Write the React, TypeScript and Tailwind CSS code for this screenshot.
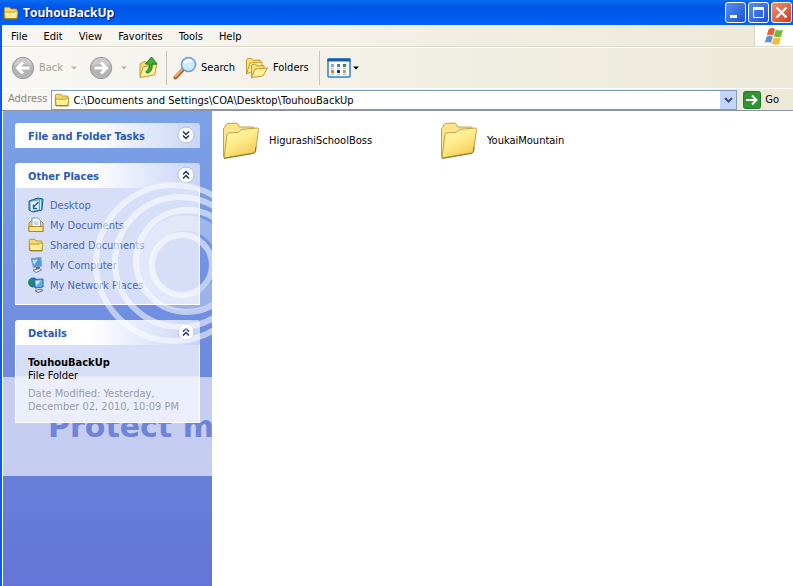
import React from 'react';

type IconProps = { className?: string };

const FolderIcon: React.FC<IconProps> = ({ className }) => (
  <svg viewBox="0 0 18 16" className={className} aria-hidden="true">
    <path d="M1.500 14V3q0-1.500 1.500-1.500h4.500L9 3.500h5.500Q16 3.500 16 5v9z" fill="#f6da6c" stroke="#b08a24" />
    <path d="M1.500 7h11q1 0 1.300-1h3L15.500 14.500H2.500z" fill="#ffee94" stroke="#b98f22" />
    <path d="M16 14.500H2.500" stroke="#8a6a14" />
  </svg>
);

const BigFolderIcon: React.FC<IconProps> = ({ className }) => (
  <svg viewBox="0 0 38 38" className={className} aria-hidden="true">
    <defs>
      <linearGradient id="folderFront" x1="0" y1="0" x2="0.6" y2="1">
        <stop offset="0" stopColor="#fffbbd" />
        <stop offset="0.5" stopColor="#ffec8c" />
        <stop offset="1" stopColor="#f3cd55" />
      </linearGradient>
    </defs>
    <path
      d="M1.500 35V7q0-1 1-1.500L4 2.500q.5-1 2-1l8-.5q1.500 0 2 1l1.500 3 13 0q2 0 2 2v22z"
      fill="#fae688"
      stroke="#c2a04a"
    />
    <path
      d="M2 36L5 12.500q.2-1.500 2-1.600l9-.4 3-2.500q.8-.6 2-.7L35 6q1.700 0 1.500 1.700L33.500 29q-.2 1.600-2 1.900z"
      fill="url(#folderFront)"
      stroke="#c2a04a"
    />
    <path d="M2 36.500l29-5q2-.3 2.400-2L34 25" fill="none" stroke="#8e7020" />
  </svg>
);

const RoundArrow: React.FC<{ flip?: boolean }> = ({ flip }) => (
  <svg viewBox="0 0 24 24" className="h-6 w-6" aria-hidden="true">
    <circle cx="12" cy="12" r="10.700" fill="#b4b4b4" stroke="#9c9c9c" />
    <path d="M3 10a9 8 0 0 1 18 0q-9-4-18 0" fill="#cbcbcb" />
    <path
      d={flip ? 'M5.500 12h12M12 6.500l5.500 5.500-5.500 5.500' : 'M18.500 12h-12M12 6.500L6.500 12l5.500 5.500'}
      fill="none"
      stroke="#fff"
      strokeWidth="3"
    />
  </svg>
);

const UpIcon = () => (
  <svg viewBox="0 0 20 24" className="h-6 w-5" aria-hidden="true">
    <path d="M1 21V8l5-3 2 2 7-1v12z" fill="#f7dc6e" stroke="#c79d2b" />
    <path d="M1 21.500L4 11l14-3-2.500 11z" fill="#fff1a0" stroke="#c79d2b" />
    <path d="M9 17q5-2 4-9h5L12.500 1 6.500 8h3.500q1 5-3 7.500 0 2 2 1.500z" fill="#3fae35" stroke="#1c7a1c" />
  </svg>
);

const SearchIcon = () => (
  <svg viewBox="0 0 24 24" className="h-6 w-6" aria-hidden="true">
    <path d="M2.500 21.500L10 13.500" stroke="#a5632a" strokeWidth="4" strokeLinecap="round" />
    <path d="M2.500 20.500L9 13.500" stroke="#eda95e" strokeWidth="2" strokeLinecap="round" />
    <circle cx="15.500" cy="8.500" r="7" fill="#cfeaff" stroke="#6f9fd6" strokeWidth="1.600" />
    <path d="M11 8a5 5 0 0 1 5-4.500q3 0 4 2-4 0-9 2.500z" fill="#fff" />
  </svg>
);

const FoldersIcon = () => (
  <svg viewBox="0 0 24 22" className="h-[22px] w-6" aria-hidden="true">
    <path d="M1.500 17V3l1-1.500h4L8 3.500l7-.5v3L6 8z" fill="#fbe27a" stroke="#c69a2b" />
    <path d="M1.500 17L5 6l12-1v5z" fill="#fff0a0" stroke="#c69a2b" />
    <path d="M6.500 20.500V8l4-1L12 9l7-.5V13z" fill="#fbe27a" stroke="#c69a2b" />
    <path d="M6.500 20.500L10 12l12.500-1L18 19z" fill="#fff0a0" stroke="#c69a2b" />
  </svg>
);

const ViewsIcon = () => (
  <svg viewBox="0 0 24 20" className="h-5 w-6" aria-hidden="true">
    <rect x="1" y="1" width="22" height="18" rx="1" fill="#fff" stroke="#2e7dcb" strokeWidth="1.500" />
    <path d="M0.500 0.500h23v3h-23z" fill="#1c5cab" />
    <path d="M4 6h3v3H4z" fill="#9a9bd0" />
    <path d="M10 6h3v3h-3z" fill="#5578c0" />
    <path d="M16 6h3v3h-3z" fill="#2f8a45" />
    <path d="M4 12h3v3H4z" fill="#e8743a" />
    <path d="M10 12h3v3h-3z" fill="#17357e" />
    <path d="M16 12h3v3h-3z" fill="#c3a12b" />
    <path d="M4 10.500h3m3 0h3m3 0h3M4 16.500h3m3 0h3m3 0h3" stroke="#a9b8cc" />
  </svg>
);

const WindowsFlag = () => (
  <svg viewBox="0 0 22 20" className="h-[18px] w-5" aria-hidden="true">
    <path d="M5 2.500q3.500-2.500 7-.3L10 9.500Q7 7.500 3 9.500z" fill="#e8602c" />
    <path d="M13 2.800q3.500 2 8 .2L19 10.500q-4 2-8-.3z" fill="#7ab83c" />
    <path d="M2.700 10.700q3.500-2.200 7 0l-2 7.200q-3.500-2.200-7 0z" fill="#5b8fe0" />
    <path d="M10.700 11.300q4 2.200 8 .4l-2 7q-4 2-8-.2z" fill="#f5bd2b" />
  </svg>
);

const DesktopIcon = () => (
  <svg viewBox="0 0 16 16" className="h-4 w-4" aria-hidden="true">
    <path d="M1 4l9-3 5 1-1 11-9 2-4-2z" fill="#5fa9cf" stroke="#1f5f8c" />
    <path d="M2.500 5l8.500-1.500-.5 9-7.500 1.500z" fill="#e7f5fc" />
    <path d="M10.500 5L6 9.500M9 11.500H5.500V7.500" fill="none" stroke="#2b5f93" strokeWidth="1.500" />
    <path d="M12.500 3v10" stroke="#c4ecf8" />
  </svg>
);

const DocumentsIcon = () => (
  <svg viewBox="0 0 16 16" className="h-4 w-4" aria-hidden="true">
    <path d="M1 14.500V6l3-3h8l3 3v8.500z" fill="#f3cf58" stroke="#b18821" />
    <path d="M4 11V1h6L12.500 3.500V11z" fill="#fff" stroke="#7d9cc4" />
    <path d="M6 5h4M6 7h5" stroke="#8fb2dc" />
    <path d="M1 9.500h14v5H1z" fill="#ffe78c" stroke="#b18821" />
  </svg>
);

const ComputerIcon = () => (
  <svg viewBox="0 0 16 16" className="h-4 w-4" aria-hidden="true">
    <path d="M3 1.500l10-1 .5 8.500-8 1.500z" fill="#4a9be0" stroke="#8d9cb8" />
    <path d="M4.500 3l5.500-.5-4 5.500z" fill="#b9e2fb" />
    <path d="M8 10h4v2H8z" fill="#56637f" />
    <path d="M5 13l7-1.500 1.500 1.500-5.500 2.500z" fill="#e8eaf2" stroke="#6c7890" />
  </svg>
);

const NetworkIcon = () => (
  <svg viewBox="0 0 16 16" className="h-4 w-4" aria-hidden="true">
    <circle cx="5" cy="5.500" r="4.900" fill="#1f8a5c" />
    <path d="M1 4q3-4 6-3L5 5zM2 9l4-2v3z" fill="#2b70c8" />
    <path d="M6 2.500l9-.5v8l-8 1z" fill="#5cb2ec" stroke="#41608f" />
    <path d="M7.500 4l5.500-.5-4.500 5z" fill="#c8ecfd" />
    <path d="M7 13.500l6-1.500 2 1.500-5 2z" fill="#e4e7f0" stroke="#5f6f8c" />
  </svg>
);

const Caret: React.FC<IconProps> = ({ className = '' }) => (
  <svg viewBox="0 0 6 4" className={`h-1 w-1.5 ${className}`} aria-hidden="true">
    <path d="M0 0.500h6L3 3.500z" fill="currentColor" />
  </svg>
);

const menus = ['File', 'Edit', 'View', 'Favorites', 'Tools', 'Help'];

const places = [
  { label: 'Desktop', icon: <DesktopIcon /> },
  { label: 'My Documents', icon: <DocumentsIcon /> },
  { label: 'Shared Documents', icon: <FolderIcon className="h-4 w-4" /> },
  { label: 'My Computer', icon: <ComputerIcon /> },
  { label: 'My Network Places', icon: <NetworkIcon /> },
];

const folders = ['HigurashiSchoolBoss', 'YoukaiMountain'];

const TitleBar = () => (
  <header className="flex h-[25px] items-center bg-linear-to-b from-[#0a6cf5] via-[#0054e3] via-30% to-[#0062fa] pr-px pl-[3px]">
    <FolderIcon className="h-4 w-4" />
    <h1 className="ml-1 flex-1 font-['Open_Sans',sans-serif] text-xs font-bold text-white [text-shadow:1px_1px_1px_#0a1883]">
      TouhouBackUp
    </h1>
    <div className="flex gap-0.5">
      <button
        aria-label="Minimize"
        className="h-[21px] w-[21px] rounded-[3px] border border-white bg-linear-to-br from-[#5a8ff5] to-[#1c4fd0]"
      >
        <svg viewBox="0 0 19 19" aria-hidden="true">
          <path d="M4 12h7v3H4z" fill="#fff" />
        </svg>
      </button>
      <button
        aria-label="Maximize"
        className="h-[21px] w-[21px] rounded-[3px] border border-white bg-linear-to-br from-[#5a8ff5] to-[#1c4fd0]"
      >
        <svg viewBox="0 0 19 19" aria-hidden="true">
          <path d="M4.500 5v9.500h10V5" fill="none" stroke="#fff" />
          <path d="M4 4h11v3H4z" fill="#fff" />
        </svg>
      </button>
      <button
        aria-label="Close"
        className="h-[21px] w-[21px] rounded-[3px] border border-white bg-linear-to-br from-[#f0906f] to-[#cf3a12]"
      >
        <svg viewBox="0 0 19 19" aria-hidden="true">
          <path d="M4.500 4.500l10 10m0-10l-10 10" stroke="#fff" strokeWidth="2.200" />
        </svg>
      </button>
    </div>
  </header>
);

const Toolbar = () => (
  <div className="flex h-[41px] items-center border-t border-white pl-[9px]">
    <button className="flex items-center gap-1 text-[#a5a294]">
      <RoundArrow />
      Back
      <Caret className="ml-1 text-[#b9b6a8]" />
    </button>
    <button aria-label="Forward" className="ml-3 flex items-center gap-2 text-[#b9b6a8]">
      <RoundArrow flip />
      <Caret />
    </button>
    <button aria-label="Up" className="ml-3">
      <UpIcon />
    </button>
    <div className="mr-1.5 ml-[7px] h-[34px] w-px bg-[#c9c6b8]" />
    <button className="flex items-center gap-1">
      <SearchIcon />
      Search
    </button>
    <button className="ml-2.5 flex items-center gap-1">
      <FoldersIcon />
      Folders
    </button>
    <div className="mr-[7px] ml-2.5 h-[34px] w-px bg-[#c9c6b8]" />
    <button aria-label="Views" className="flex items-center gap-0.5">
      <ViewsIcon />
      <Caret />
    </button>
  </div>
);

const AddressBar = () => (
  <form className="flex h-[23px] items-center border-t border-b border-t-white border-b-[#8c93a5] pl-1.5">
    <label htmlFor="address" className="mr-1 text-[#8a887c]">
      Address
    </label>
    <div className="flex h-5 flex-1 items-center border border-[#7f9db9] bg-white pl-0.5">
      <FolderIcon className="h-4 w-4" />
      <input
        id="address"
        className="ml-[3px] min-w-0 flex-1 pt-1 outline-none"
        defaultValue="C:\Documents and Settings\COA\Desktop\TouhouBackUp"
      />
      <button
        type="button"
        aria-label="Show addresses"
        className="flex h-[18px] w-4 items-center justify-center bg-[#c4d4fb] text-[#3c5080]"
      >
        <svg viewBox="0 0 9 6" className="h-1.5 w-[9px]" aria-hidden="true">
          <path d="M1 1l3.500 3.500L8 1" fill="none" stroke="currentColor" strokeWidth="2" />
        </svg>
      </button>
    </div>
    <button type="button" className="mr-3.5 ml-1.5 flex items-center gap-1">
      <svg viewBox="0 0 18 18" className="h-[18px] w-[18px]" aria-hidden="true">
        <rect x="0.500" y="0.500" width="17" height="17" rx="2" fill="#2f9434" stroke="#237a27" />
        <path d="M3 9h10M9 4.500L13.500 9 9 13.500" fill="none" stroke="#fff" strokeWidth="2" />
      </svg>
      <span className="pt-0.5">Go</span>
    </button>
  </form>
);

interface PanelProps {
  title: string;
  open?: boolean;
  children?: React.ReactNode;
}

const Panel: React.FC<PanelProps> = ({ title, open = false, children }) => (
  <section>
    <button className="flex h-[25px] w-full items-start justify-between rounded-t-[3px] bg-linear-to-r from-white from-40% to-[#c9d4f7] pt-[3px] pr-[5px] pl-[13px] font-bold text-[#2a5bb5]">
      <span className="pt-[3px]">{title}</span>
      <svg viewBox="0 0 18 18" className="h-[18px] w-[18px]" aria-hidden="true">
        <circle cx="9" cy="9" r="8" fill="#fff" stroke="#b4bfdc" />
        <path
          d={open ? 'M6 8.500l3-3 3 3M6 12.500l3-3 3 3' : 'M6 5.500l3 3 3-3M6 9.500l3 3 3-3'}
          fill="none"
          stroke="#1c3366"
          strokeWidth="1.500"
        />
      </svg>
    </button>
    {children}
  </section>
);

const Sidebar = () => (
  <aside className="relative isolate w-[210px] shrink-0 overflow-hidden border-l border-white bg-linear-to-b from-[#7ba2e7] to-[#6375d6] pt-3 pr-3 pl-3">
    <div className="absolute top-[266px] left-0 -z-10 h-[99px] w-full bg-[#c5cdf1] pt-9">
      <p className="ml-[45px] font-['DejaVu_Sans',sans-serif] text-[30px] leading-7 font-bold whitespace-nowrap text-[#6f83da]">
        Protect m
      </p>
    </div>
    <div className="flex flex-col gap-[15px]">
      <Panel title="File and Folder Tasks" />
      <Panel title="Other Places" open>
        <ul className="border border-t-0 border-white bg-[#d6dff7] pt-[7px] pb-[9px] pl-3">
          {places.map((place) => (
            <li key={place.label}>
              <a href="#" className="flex h-5 items-center gap-1.5 text-[#4a66b8]">
                {place.icon}
                <span className="pt-0.5">{place.label}</span>
              </a>
            </li>
          ))}
        </ul>
      </Panel>
      <Panel title="Details" open>
        <div className="border border-t-0 border-white bg-linear-to-b from-[#d6dff7] from-40% to-[#eef1fc]/95 to-41% pt-[11px] pb-[9px] pl-3 leading-[13px]">
          <p className="font-bold">TouhouBackUp</p>
          <p>File Folder</p>
          <p className="mt-[5px] text-[#9a9ca8]">
            Date Modified: Yesterday,
            <br />
            December 02, 2010, 10:09 PM
          </p>
        </div>
      </Panel>
    </div>
    <svg
      viewBox="0 0 209 180"
      className="pointer-events-none absolute top-16 left-0 h-[180px] w-[209px]"
      fill="none"
      stroke="#fff"
      strokeOpacity="0.55"
      aria-hidden="true"
    >
      <circle cx="171" cy="88" r="78" strokeWidth="6" />
      <circle cx="177" cy="87" r="65" strokeWidth="6" />
      <circle cx="184" cy="86" r="51" strokeWidth="6" />
      <circle cx="179" cy="90" r="30" strokeWidth="6" />
      <circle cx="182" cy="88" r="40" strokeWidth="15" strokeOpacity="0.3" />
    </svg>
  </aside>
);

export default function App() {
  return (
    <div className="flex min-h-screen flex-col bg-white font-['DejaVu_Sans_Condensed','DejaVu_Sans',sans-serif] text-[11px] text-black">
      <TitleBar />
      <div className="flex flex-1 flex-col border-l-2 border-[#0a5be8]">
        <div className="bg-linear-to-r from-[#f8f7f4] to-[#ece9d8]">
          <nav className="flex h-[22px] items-stretch border-b border-[#dcd9cb]">
            <div className="flex flex-1 items-center gap-4 pt-[3px] pl-[9px]">
              {menus.map((menu) => (
                <button key={menu}>{menu}</button>
              ))}
            </div>
            <div className="flex w-[39px] items-center justify-center border-l border-[#d8d5c6] bg-white">
              <WindowsFlag />
            </div>
          </nav>
          <Toolbar />
          <AddressBar />
        </div>
        <div className="flex flex-1">
          <Sidebar />
          <main className="flex flex-1 flex-wrap content-start bg-white pt-3 pl-2.5">
            {folders.map((name) => (
              <button key={name} className="flex h-9 w-[218px] items-center gap-[9px]">
                <BigFolderIcon className="h-[38px] w-[38px]" />
                {name}
              </button>
            ))}
          </main>
        </div>
      </div>
    </div>
  );
}
